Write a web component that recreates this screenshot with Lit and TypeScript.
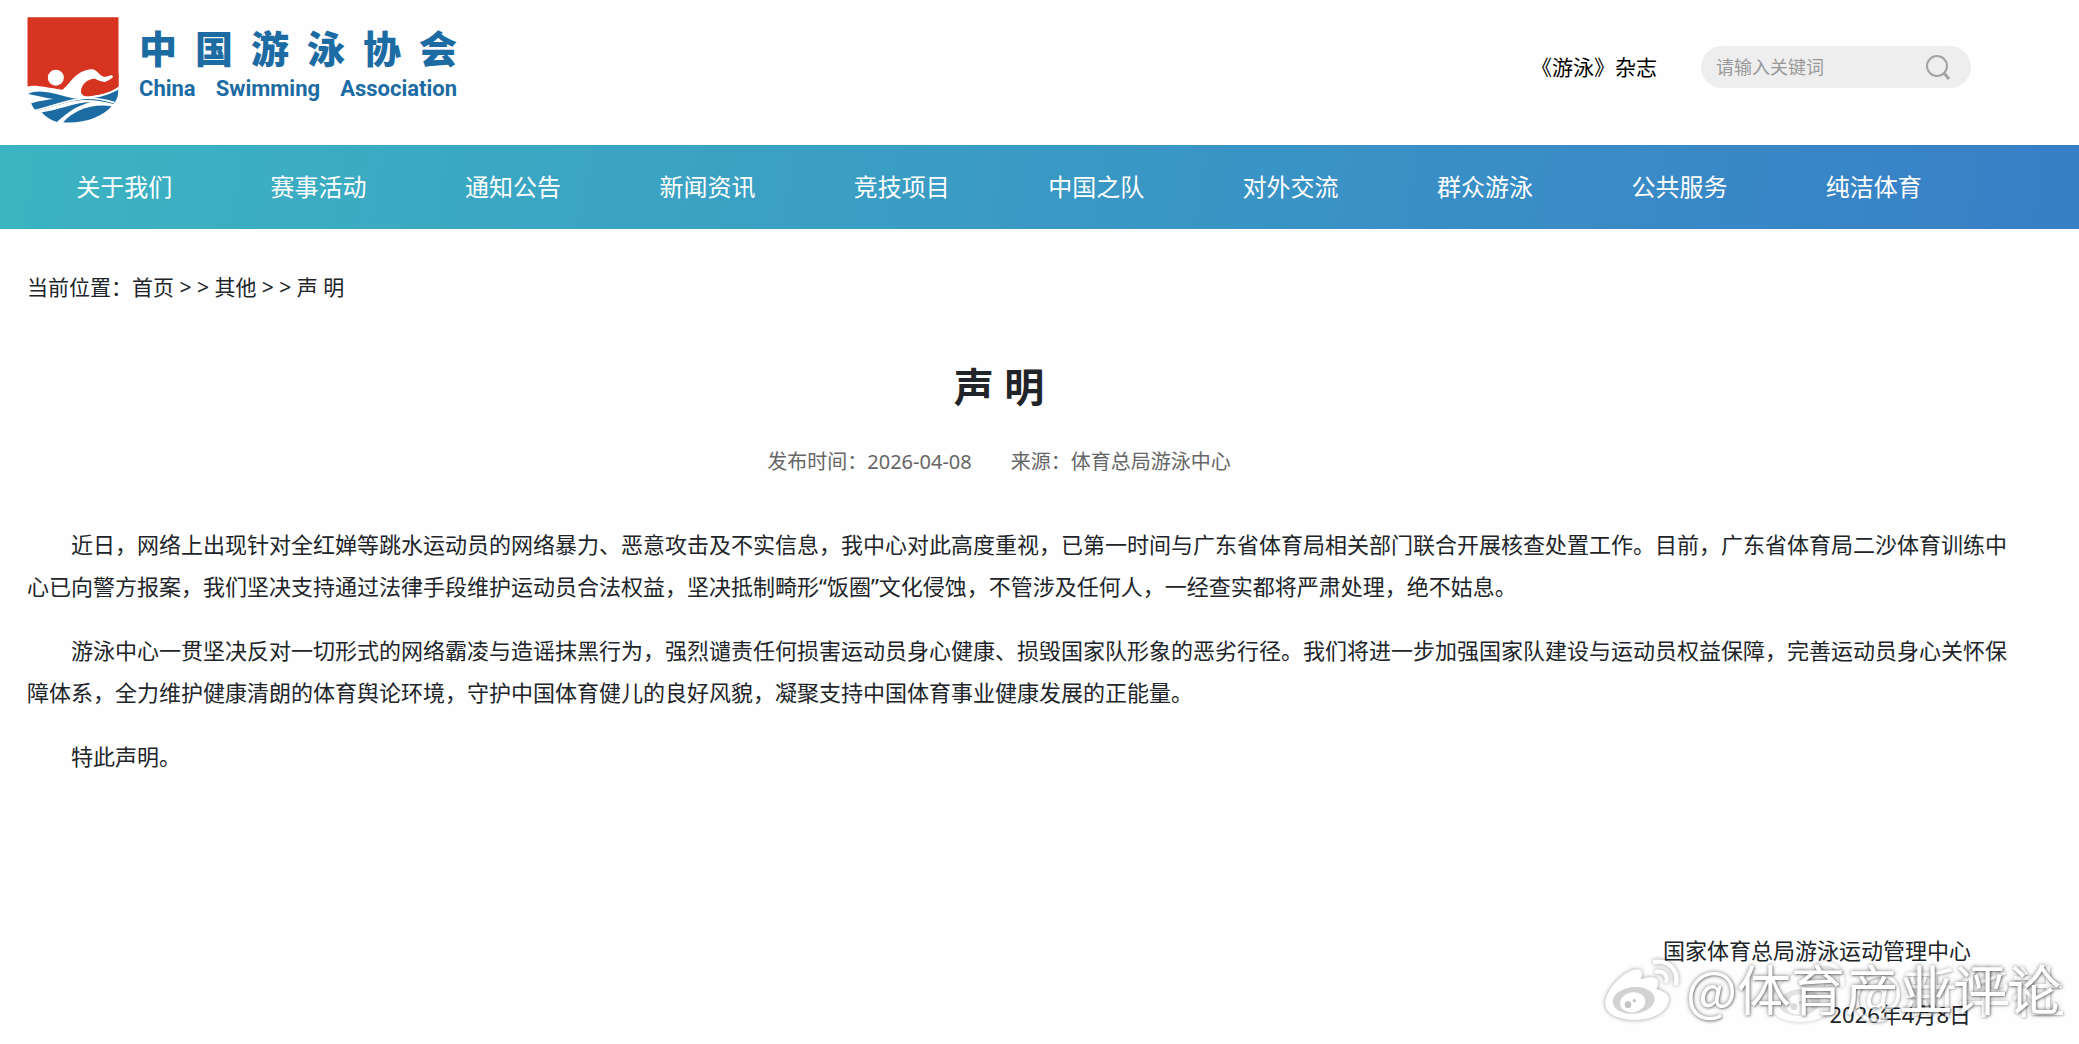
import { LitElement, html, css, svg } from "lit";
import { customElement, property } from "lit/decorators.js";

const NAV_ITEMS = [
  "关于我们",
  "赛事活动",
  "通知公告",
  "新闻资讯",
  "竞技项目",
  "中国之队",
  "对外交流",
  "群众游泳",
  "公共服务",
  "纯洁体育",
];

const PARAGRAPHS = [
  "近日，网络上出现针对全红婵等跳水运动员的网络暴力、恶意攻击及不实信息，我中心对此高度重视，已第一时间与广东省体育局相关部门联合开展核查处置工作。目前，广东省体育局二沙体育训练中心已向警方报案，我们坚决支持通过法律手段维护运动员合法权益，坚决抵制畸形“饭圈”文化侵蚀，不管涉及任何人，一经查实都将严肃处理，绝不姑息。",
  "游泳中心一贯坚决反对一切形式的网络霸凌与造谣抹黑行为，强烈谴责任何损害运动员身心健康、损毁国家队形象的恶劣行径。我们将进一步加强国家队建设与运动员权益保障，完善运动员身心关怀保障体系，全力维护健康清朗的体育舆论环境，守护中国体育健儿的良好风貌，凝聚支持中国体育事业健康发展的正能量。",
  "特此声明。",
];

@customElement("site-logo")
export class SiteLogo extends LitElement {
  static styles = css`
    :host {
      display: block;
    }
    .logo {
      display: flex;
      align-items: flex-start;
      gap: 20px;
      color: #1c6ba3;
      text-decoration: none;
    }
    .emblem {
      display: block;
      width: 92px;
      height: 106px;
    }
    .names {
      width: 318px;
      padding-top: 8px;
    }
    .row {
      display: flex;
      justify-content: space-between;
    }
    .zh {
      font: 900 38px/44px "Noto Sans CJK SC", sans-serif;
    }
    .en {
      padding-top: 6px;
      font: 700 22px/28px Roboto, "Liberation Sans", sans-serif;
    }
  `;

  render() {
    return html`
      <a class="logo" href="#" aria-label="中国游泳协会">
        <svg class="emblem" viewBox="22 20 275 318" aria-hidden="true">
          <path d="M23 21H296V240C260 250 235 258 205 258H120L60 232L23 229Z" fill="#d63420" />
          <path
            d="M22 229C45 222 75 232 128 238C148 222 160 196 186 184C205 176 218 174 228 181C240 190 246 201 258 199L274 195C280 195 281 200 277 204L262 213C252 218 238 211 224 205C204 208 187 222 184 242C183 254 195 260 212 257C245 253 275 246 297 228V245L240 300L150 310L30 260Z"
            fill="#fff"
          />
          <path
            d="M224 205C200 206 184 225 184 242C184 254 195 260 212 257C245 253 275 246 296 228V190L277 204L262 213C252 218 238 211 224 205Z"
            fill="#d63420"
          />
          <circle cx="108" cy="202" r="24" fill="#fff" />
          <path
            d="M25 251C52 236 95 246 134 258C178 272 240 268 295 238C296 257 290 270 281 281C230 268 196 265 151 274C112 284 82 292 50 302C42 296 38 288 34 279C60 271 85 268 101 266C75 262 48 256 25 251Z"
            fill="#1c6ba3"
          />
          <path
            d="M66 306C115 300 160 277 215 275C175 285 150 300 111 335C92 329 75 318 66 306Z"
            fill="#1c6ba3"
          />
          <path
            d="M130 336C160 302 215 278 275 288C249 320 190 341 130 336Z"
            fill="#1c6ba3"
          />
          <path d="M44 301C95 288 140 270 190 264C220 262 250 267 284 277" fill="none" stroke="#fff" stroke-width="5" />
        </svg>
        <div class="names">
          <div class="row zh">${[..."中国游泳协会"].map((c) => html`<span>${c}</span>`)}</div>
          <div class="row en">
            ${["China", "Swimming", "Association"].map((w) => html`<span>${w}</span>`)}
          </div>
        </div>
      </a>
    `;
  }
}

@customElement("photo-mark")
export class PhotoMark extends LitElement {
  @property() name = "";

  static styles = css`
    :host {
      display: flex;
      align-items: flex-start;
      gap: 6px;
      color: #fff;
    }
    .icon {
      width: 76px;
      height: 64px;
      overflow: visible;
      filter: drop-shadow(0 0 2px rgba(0, 0, 0, 0.4));
    }
    .name {
      font: 400 54px/60px "Noto Sans CJK SC", sans-serif;
      white-space: nowrap;
      text-shadow: 0 0 4px rgba(0, 0, 0, 0.5), 1px 1px 2px rgba(0, 0, 0, 0.3);
    }
  `;

  render() {
    return html`
      <svg class="icon" viewBox="42 44 228 192" aria-hidden="true">
        ${svg`
          <path d="M46 184C42 142 104 80 140 78C158 78 160 94 152 108C176 98 206 98 204 118C204 128 200 134 200 138C225 145 240 155 236 172C230 210 180 230 135 230C85 230 49 212 46 184Z" fill="#fff"/>
          <ellipse cx="131" cy="171" rx="63" ry="40" transform="rotate(-6 131 171)" fill="#d2d2d2"/>
          <ellipse cx="128" cy="177" rx="38" ry="30" transform="rotate(-10 128 177)" fill="#fff"/>
          <circle cx="114" cy="184" r="10" fill="#c4c4c4"/>
          <circle cx="133" cy="172" r="5" fill="#c4c4c4"/>
          <path d="M195 56C236 48 266 82 258 120" fill="none" stroke="#fff" stroke-width="13" stroke-linecap="round"/>
          <path d="M200 85C220 81 234 96 229 114" fill="none" stroke="#fff" stroke-width="12" stroke-linecap="round"/>
        `}
      </svg>
      <span class="name">@${this.name}</span>
    `;
  }
}

@customElement("app-root")
export class AppRoot extends LitElement {
  static styles = css`
    :host {
      display: block;
      font-family: "Noto Sans", "Noto Sans CJK SC", sans-serif;
      color: #212529;
      background: #fefefe;
    }
    .page {
      position: relative;
      min-height: 100vh;
      overflow: hidden;
    }
    a {
      color: inherit;
      text-decoration: none;
    }
    .header {
      display: flex;
      align-items: flex-start;
      justify-content: space-between;
      height: 128px;
      padding: 17px 108px 0 27px;
    }
    .tools {
      display: flex;
      align-items: center;
      gap: 44px;
      padding-top: 29px;
    }
    .magazine {
      font-size: 21px;
      line-height: 30px;
      color: #000;
    }
    .search {
      display: flex;
      align-items: center;
      box-sizing: border-box;
      width: 270px;
      height: 42px;
      padding: 0 20px 0 15px;
      border-radius: 21px;
      background: #eeeeef;
    }
    .query {
      flex: 1;
      min-width: 0;
      padding: 0;
      border: 0;
      outline: 0;
      background: none;
      font: inherit;
      font-size: 18px;
      color: #333;
    }
    .query::placeholder {
      color: #999;
      opacity: 1;
    }
    .go {
      display: flex;
      padding: 0;
      border: 0;
      background: none;
      cursor: pointer;
    }
    .nav {
      display: grid;
      grid-template-columns: repeat(10, 1fr);
      padding: 0 108px 0 27px;
      background: linear-gradient(100deg, #3cb4c1, #3a94c5 60%, #387fc6);
      color: #fff;
      font-size: 24px;
      line-height: 84px;
      text-align: center;
    }
    .crumbs {
      padding: 42px 108px 0 27px;
      font-size: 21px;
      line-height: 32px;
    }
    .head {
      padding: 54px 108px 0 27px;
      text-align: center;
    }
    .title {
      margin: 0;
      font-size: 40px;
      font-weight: 700;
      line-height: 60px;
    }
    .meta {
      display: flex;
      justify-content: center;
      gap: 39px;
      padding-top: 30px;
      color: #666;
      font-size: 20px;
      line-height: 30px;
    }
    .body {
      padding: 46px 70px 0 27px;
      font-size: 22px;
      line-height: 42px;
    }
    .para {
      margin: 0 0 22px;
      text-indent: 2em;
    }
    .sign {
      padding: 130px 108px 0 27px;
      font-size: 22px;
      line-height: 42px;
      text-align: right;
    }
    .line {
      margin: 0 0 22px;
    }
    .line:last-child {
      margin: 0;
    }
    .mark {
      position: absolute;
      right: 18px;
      bottom: 22px;
    }
    .faint {
      right: 14px;
      bottom: 20px;
      opacity: 0.6;
    }
  `;

  render() {
    return html`
      <div class="page">
        <header class="header">
          <site-logo></site-logo>
          <div class="tools">
            <a class="magazine" href="#">《游泳》杂志</a>
            <form class="search" role="search" @submit=${(e: Event) => e.preventDefault()}>
              <input class="query" type="text" aria-label="请输入关键词" placeholder="请输入关键词" />
              <button class="go" type="submit" aria-label="搜索">
                <svg width="26" height="26" viewBox="0 0 26 26" fill="none" stroke="#a3a3a3" stroke-width="2">
                  <circle cx="12" cy="12" r="10" />
                  <path d="M19 19L24 25" stroke-width="3" />
                </svg>
              </button>
            </form>
          </div>
        </header>
        <nav class="nav">${NAV_ITEMS.map((n) => html`<a href="#">${n}</a>`)}</nav>
        <div class="crumbs">
          当前位置：<a href="#">首页</a> &gt; &gt; <a href="#">其他</a> &gt; &gt; 声 明
        </div>
        <article>
          <div class="head">
            <h1 class="title">声 明</h1>
            <div class="meta">
              <span>发布时间：2026-04-08</span>
              <span>来源：体育总局游泳中心</span>
            </div>
          </div>
          <div class="body">${PARAGRAPHS.map((p) => html`<p class="para">${p}</p>`)}</div>
          <div class="sign">
            <p class="line">国家体育总局游泳运动管理中心</p>
            <p class="line">2026年4月8日</p>
          </div>
        </article>
        <photo-mark class="mark faint" name="新华社"></photo-mark>
        <photo-mark class="mark" name="体育产业评论"></photo-mark>
      </div>
    `;
  }
}
